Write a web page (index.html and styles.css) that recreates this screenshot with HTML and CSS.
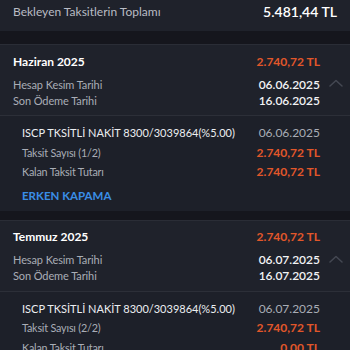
FILE: index.html
```html
<!DOCTYPE html>
<html lang="tr">
<head>
<meta charset="utf-8">
<link rel="stylesheet" href="styles.css">
</head>
<body>
<div class="total">
  <span class="total-label">Bekleyen Taksitlerin Toplamı</span>
  <span class="total-value">5.481,44 TL</span>
</div>
<div class="gap"></div>
<section class="card">
  <div class="head">
    <div class="row title-row"><span class="month">Haziran 2025</span><span class="amount">2.740,72 TL</span></div>
    <div class="dates">
      <div class="date-col">
        <div class="row"><span class="lbl">Hesap Kesim Tarihi</span><span class="date">06.06.2025</span></div>
        <div class="row"><span class="lbl">Son Ödeme Tarihi</span><span class="date">16.06.2025</span></div>
      </div>
      <svg class="chev" width="14" height="8" viewBox="0 0 14 8"><path d="M1 7 L7 1.5 L13 7" fill="none" stroke="#444852" stroke-width="1.5" stroke-linecap="round" stroke-linejoin="round"/></svg>
    </div>
  </div>
  <div class="detail">
    <div class="row"><span class="item">ISCP TKSİTLİ NAKİT 8300/3039864(%5.00)</span><span class="idate">06.06.2025</span></div>
    <div class="row"><span class="lbl">Taksit Sayısı (1/2)</span><span class="amount">2.740,72 TL</span></div>
    <div class="row"><span class="lbl">Kalan Taksit Tutarı</span><span class="amount">2.740,72 TL</span></div>
    <div class="early">ERKEN KAPAMA</div>
  </div>
</section>
<div class="gap small"></div>
<section class="card">
  <div class="head">
    <div class="row title-row"><span class="month">Temmuz 2025</span><span class="amount">2.740,72 TL</span></div>
    <div class="dates">
      <div class="date-col">
        <div class="row"><span class="lbl">Hesap Kesim Tarihi</span><span class="date">06.07.2025</span></div>
        <div class="row"><span class="lbl">Son Ödeme Tarihi</span><span class="date">16.07.2025</span></div>
      </div>
      <svg class="chev" width="14" height="8" viewBox="0 0 14 8"><path d="M1 7 L7 1.5 L13 7" fill="none" stroke="#444852" stroke-width="1.5" stroke-linecap="round" stroke-linejoin="round"/></svg>
    </div>
  </div>
  <div class="detail">
    <div class="row"><span class="item">ISCP TKSİTLİ NAKİT 8300/3039864(%5.00)</span><span class="idate">06.07.2025</span></div>
    <div class="row"><span class="lbl">Taksit Sayısı (2/2)</span><span class="amount">2.740,72 TL</span></div>
    <div class="row"><span class="lbl">Kalan Taksit Tutarı</span><span class="amount">0,00 TL</span></div>
  </div>
</section>
</body>
</html>
```
FILE: styles.css
```css
* { box-sizing: border-box; }
html, body { margin: 0; padding: 0; }
body {
  background: #15161d;
  font-family: "Lato", "Noto Sans", sans-serif;
  color: #fff;
  width: 350px;
  height: 350px;
  overflow: hidden;
}
.total {
  background: #1f222b;
  height: 31px;
  display: flex;
  justify-content: space-between;
  align-items: center;
  padding: 0 13px 9px 13px;
}
.total-label { font-size: 12px; color: #b9bcc4; }
.total-value { font-size: 14px; font-weight: 600; color: #fff; }
.gap { height: 13px; background: #15161d; }
.gap.small { height: 9px; }
.card {
  background: #1f222b;
  border-top: 1px solid #2a2d36;
}
.head { padding: 7px 30px 7px 13px; }
.row { display: flex; justify-content: space-between; align-items: center; }
.title-row { height: 18px; margin-bottom: 6px; }
.month { font-size: 12px; font-weight: 700; color: #fff; }
.amount { font-size: 12px; font-weight: 700; color: #e2572a; }
.dates { display: flex; align-items: flex-start; position: relative; }
.date-col { flex: 1; }
.date-col .row { height: 16px; }
.lbl { font-size: 11px; color: #a9adb6; letter-spacing: -0.1px; }
.detail .lbl { font-size: 10.8px; letter-spacing: -0.2px; }
.date { font-size: 12px; font-weight: 600; color: #f2f3f5; }
.chev { position: absolute; right: -23px; top: 3px; }
.detail {
  border-top: 1px solid #2c2f38;
  background: #1d2029;
  padding: 7px 30px 3px 22px;
}
.detail .row { height: 19.5px; }
.item { font-size: 11px; color: #eceef1; }
.idate { font-size: 12px; color: #a9adb6; }
.early {
  font-size: 11.5px;
  font-weight: 700;
  color: #3a8ee6;
  height: 24px;
  display: flex;
  align-items: center;
  margin-top: 2px;
}
```
